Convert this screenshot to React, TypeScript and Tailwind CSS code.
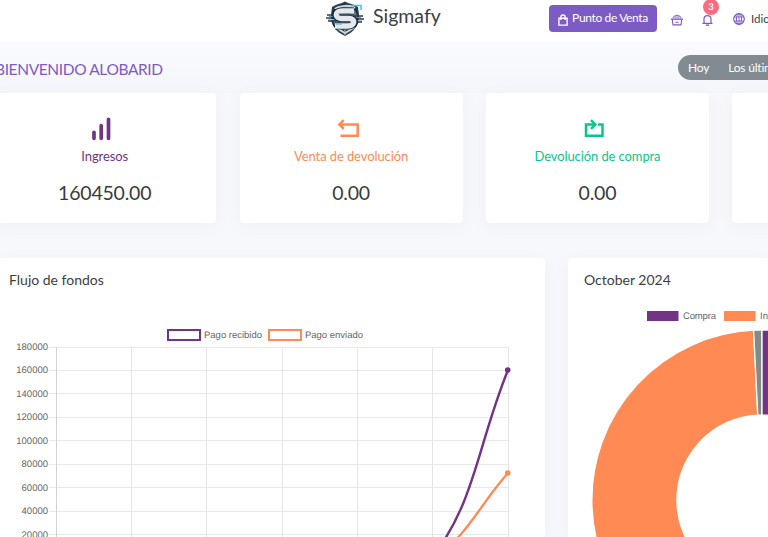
import type { ReactNode } from 'react';

const yLabels = ['180000', '160000', '140000', '120000', '100000', '80000', '60000', '40000', '20000', '0'];
const gridX = [56.5, 131.5, 206.5, 282.5, 357.5, 432.5, 508.5];

function Logo() {
  return (
    <svg className="h-[37px] w-[40px] shrink-0" viewBox="0 0 40 37" fill="none">
      {/* Shield */}
      <path d="M20 1.500C24 4 29 4 33 7L34 15C34.500 25 29 32 20 36C11 32 5.500 25 6 15L7 7C11 4 16 4 20 1.500Z" fill="#2c3d4d" />
      <circle cx="20" cy="18" r="13" fill="#6b7a85" stroke="#17293b" strokeWidth="1.500" />
      <path d="M10 9C14 5.500 25 4.500 30 8M10 27L20 33L30 27" stroke="#d3dbe0" strokeWidth="2" />
      {/* Side circuits */}
      <path d="M2 15H12M1 18H13M3 21H11M28 16H38M27 19H39M29 22H37" stroke="#2b3d4e" strokeWidth="1.700" />
      <path d="M4 16.500H12M28 17.500H36" stroke="#4f9fc4" strokeWidth="1.100" />
      <path d="M3 19.500H12M28 20.500H37" stroke="#b3bdc5" strokeWidth="1" />
      {/* Monogram ribbon */}
      <path d="M29 11H17C8 11 9 18.500 16 18.500H24C32 18.500 31 26 23 26H10" stroke="#142a3e" strokeWidth="7" />
      <path d="M29 11H17C9 11 10 18.500 16 18.500H24C31 18.500 30 26 23 26H10" stroke="#e3e9ec" strokeWidth="5.400" />
      <path d="M13 13.500H26" stroke="#8fa3b0" strokeWidth="0.800" />
      <path d="M18 13.500H26M11 24H17" stroke="#4aaccb" strokeWidth="1.200" />
      <path d="M26 5.500H36V10" stroke="#32cbdc" strokeWidth="1.500" />
      <path d="M20 29.500V35" stroke="#b8c5cc" strokeWidth="1" />
    </svg>
  );
}

function BagIcon() {
  return (
    <svg className="mt-[3px] h-[12px] w-[10px]" viewBox="0 0 10 12" fill="none" stroke="white" strokeWidth="1.400">
      <path d="M0.900 4.200H9.100V11.100H0.900ZM2.900 6V3.100A2.100 2.100 0 0 1 7.100 3.100V6" />
    </svg>
  );
}

function BasketIcon() {
  return (
    <svg className="h-[12px] w-[12px]" viewBox="0 0 12 12" fill="none" stroke="#7d5bc4">
      <path d="M2 4.500C2 0.200 10 0.200 10 4.500" strokeWidth="0.900" />
      <path d="M0 5.200H12" strokeWidth="1.300" />
      <path d="M1.300 5.500L2 10.900H10L10.700 5.500M4.300 8.200H7.700" strokeWidth="1.100" />
      <path d="M4.300 1.500V5M6 1V5M7.700 1.500V5M2.500 3H9.500" strokeWidth="0.500" />
    </svg>
  );
}

function BellIcon() {
  return (
    <svg className="h-[12px] w-[11px]" viewBox="0 0 11 12" fill="none" stroke="#7d5bc4" strokeWidth="1.200">
      <path d="M0.500 9.300H10.500M2 9V5.200C2 0.400 9 0.400 9 5.200V9" />
      <path d="M4 11.200H7" strokeWidth="1.400" />
    </svg>
  );
}

function GlobeIcon() {
  return (
    <svg className="h-[12px] w-[12px]" viewBox="0 0 12 12" fill="none" stroke="#7d5bc4">
      <circle cx="6" cy="6" r="5.300" strokeWidth="1.200" />
      <ellipse cx="6" cy="6" rx="2.500" ry="5.300" />
      <path d="M6 0.500V11.500M1 4H11M1 8H11" strokeWidth="0.900" />
    </svg>
  );
}

function BarsIcon() {
  return (
    <svg className="h-6 w-6" viewBox="0 0 24 24" stroke="#723485" strokeWidth="3.700" strokeLinecap="round">
      <path d="M5 15.300V21.300M12.200 8.700V21.300M19.500 2.300V21.300" />
    </svg>
  );
}

function SaleReturnIcon() {
  return (
    <svg className="h-6 w-6" viewBox="0 0 24 24" fill="none" stroke="#ff8a54" strokeWidth="2.500">
      <path d="M4.500 18.800H21.700V7.500H3.500" />
      <path d="M7.700 3.200L3.400 7.500L7.700 11.800" />
    </svg>
  );
}

function PurchaseReturnIcon() {
  return (
    <svg className="h-6 w-6" viewBox="0 0 24 24" fill="none" stroke="#0ac58b" strokeWidth="2.500">
      <path d="M12 7.500H4V18.800H20.500V7.500H16" />
      <path d="M9 3.200L13.300 7.500L9 11.800" />
    </svg>
  );
}

type StatCardProps = { icon?: ReactNode; title?: string; value?: string; className?: string };

function StatCard({ icon, title, value, className }: StatCardProps) {
  return (
    <div className={`flex h-[130px] w-[223px] shrink-0 flex-col items-center rounded bg-white pt-6 shadow-[0_4px_20px_1px_rgba(0,0,0,0.03)] ${className ?? ''}`}>
      <div className="-ml-[7px] h-6">{icon}</div>
      <div className="mt-[6px] text-[13px] leading-[18px] tracking-[-0.1px] whitespace-nowrap">{title}</div>
      <div className="mt-[16px] text-[19.5px] leading-6 tracking-[-0.2px] text-[#373b3e]">{value}</div>
    </div>
  );
}

function CashFlowChart() {
  return (
    <svg className="block h-[217px] w-[545px] [text-rendering:geometricPrecision]" viewBox="0 320 545 217" fontFamily="'Liberation Sans', sans-serif" fontSize="9.500" fill="#666">
      <rect x="168" y="330" width="32" height="10" fill="white" stroke="#723485" strokeWidth="2" />
      <text x="204" y="338" textLength="58">Pago recibido</text>
      <rect x="269" y="330" width="32" height="10" fill="white" stroke="#ff8a54" strokeWidth="2" />
      <text x="305" y="338" textLength="58">Pago enviado</text>
      {yLabels.map((label, i) => (
        <g key={label}>
          <line x1="49" x2="508" y1={Math.floor(347 + i * 23.45) + 0.5} y2={Math.floor(347 + i * 23.45) + 0.5} stroke="#e8e8e8" />
          <text x="48" y={350 + i * 23.45} textAnchor="end">{label}</text>
        </g>
      ))}
      {gridX.map((x, i) => (
        <line key={x} x1={x} x2={x} y1="347" y2="566" stroke={i === 0 ? '#d2d2d2' : '#e5e5e5'} />
      ))}
      <g fill="none" strokeWidth="2.400">
        <path d="M431.500 558C467.800 537.600 477.500 507 508 473" stroke="#ff8a54" />
        <path d="M431.500 558C475 503.500 477.500 445 508 370" stroke="#723485" />
      </g>
      <circle cx="507.700" cy="473" r="2.800" fill="#ff8a54" />
      <circle cx="507.700" cy="370" r="2.800" fill="#723485" />
    </svg>
  );
}

function MonthChart() {
  return (
    <svg className="block h-[237px] w-[200px] [text-rendering:geometricPrecision]" viewBox="568 300 200 237" fontFamily="'Liberation Sans', sans-serif" fontSize="9.500" fill="#666">
      <rect x="647" y="311" width="31.500" height="10" fill="#723485" />
      <text x="683" y="319" textLength="33">Compra</text>
      <rect x="724" y="311" width="31.500" height="10" fill="#ff8a54" />
      <text x="760" y="319">Ingresos</text>
      <g stroke="white" strokeWidth="1.300">
        <path d="M762 670A170 170 0 0 1 753.600 330.200L757.800 415.100A85 85 0 0 0 762 585Z" fill="#ff8a54" />
        <path d="M753.600 330.200A170 170 0 0 1 762 330V415A85 85 0 0 0 757.800 415.100Z" fill="#828c86" />
        <path d="M762 330A170 170 0 0 1 932 500H847A85 85 0 0 0 762 415Z" fill="#723485" />
      </g>
    </svg>
  );
}

export default function App() {
  return (
    <div className="h-[537px] w-[768px] overflow-hidden bg-[#f7f8fc] font-[Lato,sans-serif] text-[#3c4043]">
      <header className="flex h-[42px] overflow-hidden bg-white">
        <div className="flex w-[549px] shrink-0 gap-[8px] pl-[325px]">
          <Logo />
          <span className="mt-[4px] text-[19.5px] leading-6">Sigmafy</span>
        </div>
        <button className="mt-[5px] flex h-[27px] w-[108px] shrink-0 items-center justify-center gap-[4px] rounded bg-[#7d5bc4] text-[12px] tracking-[-0.35px] whitespace-nowrap text-white">
          <BagIcon />
          <span className="-mt-px">Punto de Venta</span>
        </button>
        <div className="mt-[14px] ml-[14px] shrink-0"><BasketIcon /></div>
        <div className="relative mt-[14px] ml-[19px] h-[12px] shrink-0">
          <BellIcon />
          <span className="absolute -top-[15px] left-[1px] flex h-4 w-4 items-center justify-center rounded-full bg-[#ff6b7e] text-[9.5px] font-bold text-white">3</span>
        </div>
        <div className="mt-[10px] ml-[20px] flex shrink-0 gap-[6px] text-[11.5px] leading-[17px]">
          <span className="mt-[3px]"><GlobeIcon /></span>
          <span>Idioma</span>
        </div>
      </header>

      <main>
        <div className="flex h-[51px] items-start justify-between bg-linear-to-b from-[#fafbff] to-[#f5f6fa]">
          <h1 className="mt-[17px] -ml-[5px] text-[15.5px] leading-5 tracking-[-0.38px] whitespace-nowrap text-[#7d5bc4]">BIENVENIDO ALOBARID</h1>
          <div className="mt-[13px] flex h-[25px] w-[90px] items-center gap-[19px] overflow-hidden rounded-l-full bg-[#828b92] pl-[10px] text-[12px] tracking-[-0.2px] whitespace-nowrap text-white">
            <span>Hoy</span>
            <span>Los últimos 7 días</span>
          </div>
        </div>

        <div className="-ml-[6.8px] flex gap-[23.4px]">
          <StatCard icon={<BarsIcon />} title="Ingresos" value="160450.00" className="text-[#723485]" />
          <StatCard icon={<SaleReturnIcon />} title="Venta de devolución" value="0.00" className="text-[#ff8a54]" />
          <StatCard icon={<PurchaseReturnIcon />} title="Devolución de compra" value="0.00" className="text-[#0ac58b]" />
          <StatCard />
        </div>

        <div className="mt-[35px] flex h-[279px] gap-[23px]">
          <section className="w-[545px] shrink-0 rounded-tr bg-white shadow-[0_4px_20px_1px_rgba(0,0,0,0.03)]">
            <h2 className="h-[62px] pt-[12px] pl-[9px] text-[14px] leading-5">Flujo de fondos</h2>
            <CashFlowChart />
          </section>
          <section className="w-[200px] shrink-0 rounded-tl bg-white shadow-[0_4px_20px_1px_rgba(0,0,0,0.03)]">
            <h2 className="h-[42px] pt-[12px] pl-4 text-[14px] leading-5">October 2024</h2>
            <MonthChart />
          </section>
        </div>
      </main>
    </div>
  );
}
